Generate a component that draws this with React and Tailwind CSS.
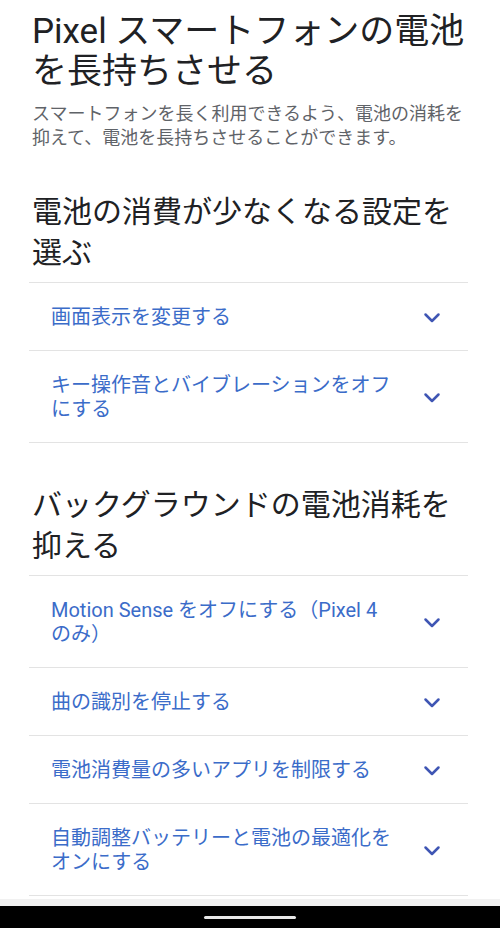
import React from 'react';

const sections = [
  {
    heading: '電池の消費が少なくなる設定を選ぶ',
    items: ['画面表示を変更する', 'キー操作音とバイブレーションをオフにする'],
  },
  {
    heading: 'バックグラウンドの電池消耗を抑える',
    items: [
      'Motion Sense をオフにする（Pixel 4 のみ）',
      '曲の識別を停止する',
      '電池消費量の多いアプリを制限する',
      '自動調整バッテリーと電池の最適化をオンにする',
    ],
  },
];

const Chevron = () => (
  <svg width="24" height="24" viewBox="0 0 24 24" fill="none" className="shrink-0">
    <path d="M5.5 9.5 L12 16 L18.5 9.5" stroke="#3f56b4" strokeWidth="2.5" strokeLinecap="round" strokeLinejoin="round" />
  </svg>
);

const AccordionRow = ({ label }) => (
  <div className="flex items-center border-b border-[#e3e3e3] pt-[22px] pb-[21px] pl-[22px] pr-[24px]">
    <p className="w-[345px] text-[20px] leading-[24px] text-[#3b6cc9]">{label}</p>
    <div className="flex-1" />
    <Chevron />
  </div>
);

export default function App() {
  return (
    <div
      className="flex h-[928px] w-[500px] flex-col overflow-hidden bg-white"
      style={{ fontFamily: 'Roboto, "Noto Sans CJK JP", sans-serif' }}
    >
      <div className="flex-1 overflow-hidden pt-[12px]">
        <div className="px-[32px]">
          <h1 className="text-[35px] leading-[40px] font-normal text-[#202124]">
            Pixel スマートフォンの電池を長持ちさせる
          </h1>
          <p className="mt-[10px] text-[18px] leading-[24px] text-[#5f6368]">
            スマートフォンを長く利用できるよう、電池の消耗を抑えて、電池を長持ちさせることができます。
          </p>
        </div>

        {sections.map((s) => (
          <section key={s.heading} className="mt-[41px]">
            <h2 className="px-[32px] text-[30px] leading-[41px] font-normal text-[#202124]">{s.heading}</h2>
            <div className="ml-[29px] mr-[32px] mt-[9px] border-t border-[#e3e3e3]">
              {s.items.map((it) => (
                <AccordionRow key={it} label={it} />
              ))}
            </div>
          </section>
        ))}
      </div>

      <div className="h-[7px] bg-[#f1f1f1]" />
      <div className="flex h-[22px] items-center justify-center bg-black">
        <div className="h-[3px] w-[92px] rounded-full bg-[#e8e8e8]" />
      </div>
    </div>
  );
}
